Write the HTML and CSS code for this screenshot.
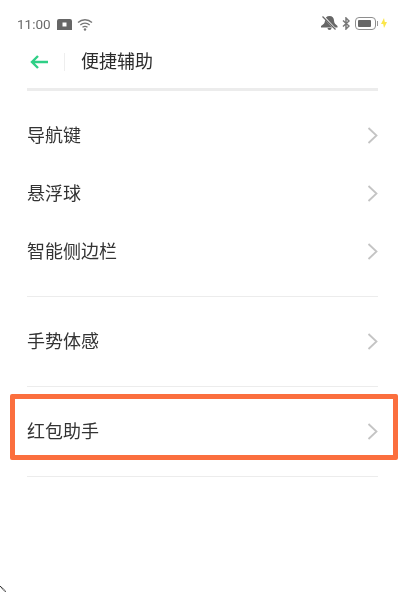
FILE: index.html
```html
<!DOCTYPE html>
<html lang="zh">
<head>
<meta charset="utf-8">
<title>便捷辅助</title>
<link rel="stylesheet" href="styles.css">
</head>
<body>
<div class="screen">
  <div class="status">
    <div class="status-left">
      <span class="time">11:00</span>
      <svg class="ic-card" viewBox="0 0 15 11"><path fill="#666" fill-rule="evenodd" d="M2 0h11a2 2 0 0 1 2 2v9H0V2a2 2 0 0 1 2-2zm3.500 3.500v4h4v-4z"/></svg>
      <svg class="ic-wifi" viewBox="0 0 16 13"><g fill="none" stroke="#777" stroke-width="1.300"><path d="M1 4.500c4-3.700 10-3.700 14 0"/><path d="M3.300 7c2.700-2.400 6.700-2.400 9.400 0"/><path d="M5.500 9.300c1.500-1.200 3.500-1.200 5 0"/></g><circle cx="8" cy="11.500" r="1.200" fill="#777"/></svg>
    </div>
    <div class="status-right">
      <svg class="ic-bell" viewBox="0 0 18 14"><path fill="#666" d="M9.500 0c2.800 0 4.500 2 4.500 4.500 0 2.500 1.500 4 3.500 5.500v1.500H1V10c2.500-1.500 4-3 4-5.500C5 2 6.700 0 9.500 0zM7.500 12h4a2 2 0 0 1-4 0z"/><path stroke="#fff" stroke-width="2" d="M3 0l13 14"/><path stroke="#666" stroke-width="1.200" d="M2.500 .5l13 13"/></svg>
      <svg class="ic-bt" viewBox="0 0 8 13"><path fill="none" stroke="#777" stroke-width="1.500" d="M1 3.500l6 5.500-3 3V1l3 3-6 5.500"/></svg>
      <div class="battery"><div class="battery-fill"></div></div>
      <div class="battery-cap"></div>
      <svg class="ic-bolt" viewBox="0 0 6 10"><path fill="#fbe64a" d="M3 0l.8 4H6L3 10l-.8-4H0z"/></svg>
    </div>
  </div>

  <header class="bar">
    <svg class="back" viewBox="0 0 18 14"><path fill="none" stroke="#2fcf86" stroke-width="2.400" d="M18 7H2M8 1L2 7l6 6"/></svg>
    <span class="bar-sep"></span>
    <h1 class="title">便捷辅助</h1>
  </header>
  <div class="thick-rule"></div>

  <div class="group">
    <div class="row"><span class="label">导航键</span><svg class="chev" viewBox="0 0 11 17"><path d="M1.500 1l8 7.500-8 7.500"/></svg></div>
    <div class="row"><span class="label">悬浮球</span><svg class="chev" viewBox="0 0 11 17"><path d="M1.500 1l8 7.500-8 7.500"/></svg></div>
    <div class="row"><span class="label">智能侧边栏</span><svg class="chev" viewBox="0 0 11 17"><path d="M1.500 1l8 7.500-8 7.500"/></svg></div>
  </div>
  <div class="rule"></div>
  <div class="group">
    <div class="row"><span class="label">手势体感</span><svg class="chev" viewBox="0 0 11 17"><path d="M1.500 1l8 7.500-8 7.500"/></svg></div>
  </div>
  <div class="rule"></div>
  <div class="group">
    <div class="row row-marked"><span class="label">红包助手</span><svg class="chev" viewBox="0 0 11 17"><path d="M1.500 1l8 7.500-8 7.500"/></svg><div class="mark"></div></div>
  </div>
  <div class="rule"></div>
  <svg class="corner" viewBox="0 0 7 7"><path stroke="#222" stroke-width="1.200" d="M0 0l6 6" stroke-dasharray="1.200 .5"/></svg>
</div>
</body>
</html>
```

FILE: styles.css
```css
* { box-sizing: border-box; }
html, body { margin: 0; padding: 0; background: #fff; }
.screen {
  position: relative;
  width: 415px;
  height: 593px;
  overflow: hidden;
  font-family: "Noto Sans CJK SC", "Liberation Sans", sans-serif;
  color: #333;
  filter: blur(0.5px);
}
.status {
  height: 48px;
  display: flex;
  justify-content: space-between;
  align-items: center;
  padding: 0 28px 0 17px;
}
.status-left, .status-right { display: flex; align-items: center; }
.status-right { margin-bottom: 2px; }
.time { font-family: "Roboto", sans-serif; font-size: 13.500px; color: #6a6a6a; }
.ic-card { width: 15px; height: 11px; margin-left: 6px; }
.ic-wifi { width: 16px; height: 13px; margin-left: 5px; }
.ic-bell { width: 18px; height: 14px; }
.ic-bt { width: 8px; height: 13px; margin-left: 4px; }
.battery {
  width: 21px; height: 13px; margin-left: 5px;
  border: 1.500px solid #8e8e8e; border-radius: 4px; padding: 2px;
}
.battery-fill { width: 13px; height: 100%; background: #666; border-radius: 1px; }
.battery-cap { width: 1.500px; height: 5px; background: #999; margin-left: 1px; }
.ic-bolt { width: 6px; height: 10px; margin-left: 3px; }
.bar { height: 28px; display: flex; align-items: center; padding-left: 30px; }
.back { width: 18px; height: 14px; }
.bar-sep { width: 1px; height: 18px; background: #eee; margin-left: 16px; }
.title { margin: 0 0 4px 16px; font-size: 18px; font-weight: 400; color: #2c2c2c; line-height: 26px; }
.thick-rule { height: 3px; margin: 12px 37px 0 27px; background: #ececec; }
.group { padding: 15px 0 16px; }
.row {
  height: 58px;
  display: flex;
  justify-content: space-between;
  align-items: center;
  padding: 0 37px 0 27px;
  font-size: 18px;
  color: #333;
}
.label { margin-bottom: 3px; }
.chev { width: 11px; height: 17px; fill: none; stroke: #c4c4c4; stroke-width: 1.800; }
.rule { height: 1px; margin: 0 37px 0 27px; background: #ececec; }
.row-marked { position: relative; }
.mark {
  position: absolute;
  left: 10px; top: -8px;
  width: 388px; height: 66px;
  border: 5px solid #fb6f3e;
  border-radius: 2px;
}
.corner { position: absolute; left: 0; bottom: 0; width: 7px; height: 7px; }
```
